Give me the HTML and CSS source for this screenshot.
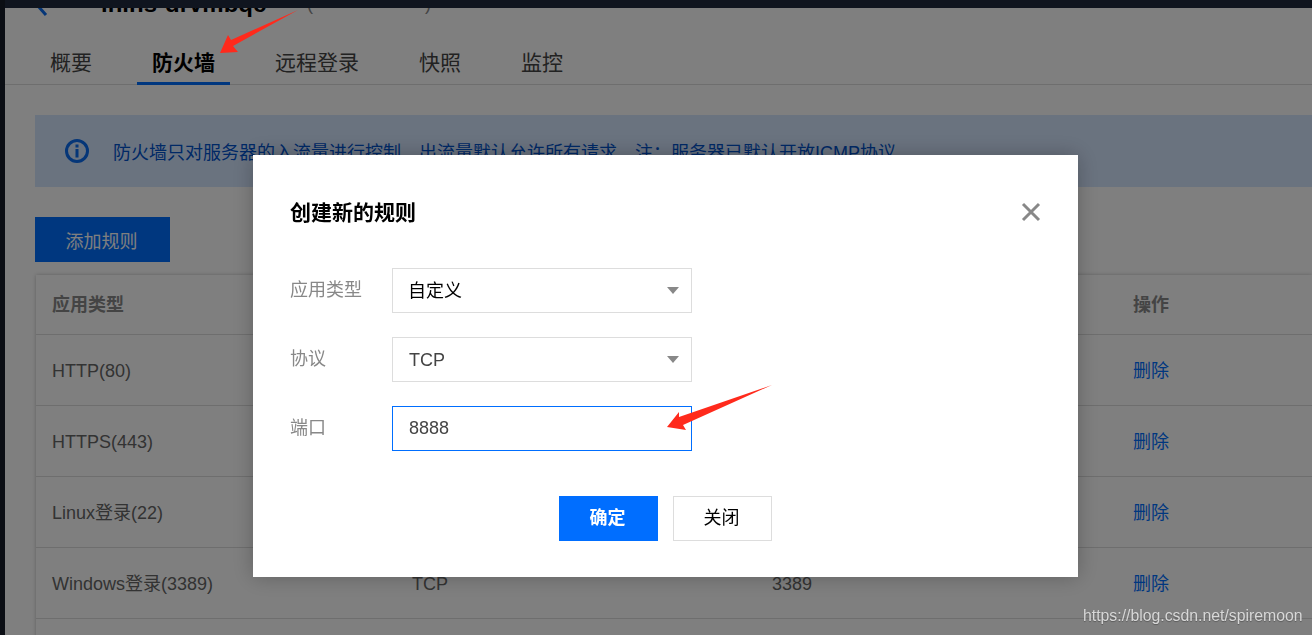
FILE: index.html
```html
<!DOCTYPE html>
<html lang="zh-CN">
<head>
<meta charset="utf-8">
<title>防火墙</title>
<link rel="stylesheet" href="styles.css">
</head>
<body>
<div class="page">
  <aside class="side"></aside>
  <div class="column">
    <div class="topbar"></div>
    <main class="main">
      <div class="head">
        <svg class="back" width="14" height="34" viewBox="0 0 14 34"><path d="M11 10 L3 19 L11 28" fill="none" stroke="#0a6cf0" stroke-width="3"/></svg>
        <h1 class="name">lhins-drvmbqc</h1>
        <span class="paren">(</span>
        <span class="paren">)</span>
      </div>
      <nav class="tabs">
        <a class="tab">概要</a>
        <a class="tab tab-on">防火墙</a>
        <a class="tab">远程登录</a>
        <a class="tab">快照</a>
        <a class="tab">监控</a>
      </nav>
      <div class="notice">
        <svg class="info" width="24" height="24" viewBox="0 0 24 24"><circle cx="12" cy="12" r="10.5" fill="none" stroke="#0a6cf0" stroke-width="3"/><rect x="10.5" y="5.5" width="3" height="3" fill="#0a6cf0"/><rect x="10.5" y="10" width="3" height="8.5" fill="#0a6cf0"/></svg>
        <span>防火墙只对服务器的入流量进行控制，出流量默认允许所有请求。注：服务器已默认开放ICMP协议</span>
      </div>
      <button class="add">添加规则</button>
      <div class="table">
        <div class="row row-head"><span>应用类型</span><span>协议</span><span>端口</span><span>操作</span></div>
        <div class="row"><span>HTTP(80)</span><span>TCP</span><span>80</span><a class="link">删除</a></div>
        <div class="row"><span>HTTPS(443)</span><span>TCP</span><span>443</span><a class="link">删除</a></div>
        <div class="row"><span>Linux登录(22)</span><span>TCP</span><span>22</span><a class="link">删除</a></div>
        <div class="row"><span>Windows登录(3389)</span><span>TCP</span><span>3389</span><a class="link">删除</a></div>
        <div class="row"></div>
      </div>
    </main>
  </div>
</div>
<div class="overlay">
  <section class="modal">
    <div class="modal-head">
      <h2 class="modal-title">创建新的规则</h2>
      <svg class="close" width="20" height="20" viewBox="0 0 20 20"><path d="M2 2 L18 18 M18 2 L2 18" stroke="#888" stroke-width="3" fill="none"/></svg>
    </div>
    <div class="form">
      <div class="field"><label class="label">应用类型</label><div class="control"><span class="value-cn">自定义</span><i class="caret"></i></div></div>
      <div class="field"><label class="label">协议</label><div class="control"><span>TCP</span><i class="caret"></i></div></div>
      <div class="field"><label class="label">端口</label><div class="control control-on"><span class="value-num">8888</span></div></div>
    </div>
    <div class="actions">
      <button class="btn btn-main">确定</button>
      <button class="btn">关闭</button>
    </div>
  </section>
</div>
<svg class="arrow arrow-one" width="82" height="46" viewBox="218 9 82 46"><path d="M220 53 L228 35 L231 40 L298 10 L233 46 L238 52 Z" fill="#ff2a1c"/></svg>
<svg class="arrow arrow-two" width="108" height="48" viewBox="665 384 108 48"><path d="M667 427 L679 412 L679 417 L772 385 L683 425 L686 430 Z" fill="#ff2a1c"/></svg>
<div class="mark">https://blog.csdn.net/spiremoon</div>
</body>
</html>
```

FILE: styles.css
```css
* { box-sizing: border-box; }
html, body { margin: 0; height: 100%; overflow: hidden; }
body { font-family: "Liberation Sans", "Noto Sans CJK SC", sans-serif; color: #000; background: #fff; }
.page { display: flex; height: 635px; overflow: hidden; }
.side { width: 5px; flex: none; background: #161c28; }
.column { flex: 1; min-width: 0; display: flex; flex-direction: column; }
.topbar { height: 8px; flex: none; background: #202a3e; position: relative; z-index: 1; }
.main { flex: 1; min-height: 0; background: #fff; }

.head { display: flex; align-items: center; height: 34px; margin-top: -21px; padding-left: 30px; }
.back { margin-right: 52px; flex: none; }
.name { margin: 0; width: 206px; font-size: 24px; line-height: 34px; font-weight: 700; color: #000; }
.paren { font-size: 18px; color: #888; }
.paren + .paren { margin-left: 112px; }

.tabs { display: flex; gap: 30px; height: 37px; margin-top: 27px; padding-left: 30px; border-bottom: 1px solid #ddd; }
.tab { height: 37px; padding: 0 15px; font-size: 21px; line-height: 29px; color: #444; }
.tab-on { font-weight: 700; color: #000; border-bottom: 3px solid #006eff; }

.notice { display: flex; align-items: center; gap: 24px; height: 72px; margin: 30px 0 0 30px; padding-left: 30px; background: #d5e6ff; color: #0052cc; font-size: 18px; }
.info { flex: none; }

.add { display: block; width: 135px; height: 45px; margin: 30px 0 0 30px; padding: 0 2px 0 0; border: 0; background: #006eff; color: #fff; font: inherit; font-size: 18px; }

.table { margin: 13px 0 0 31px; background: #fff; box-shadow: 0 0 4px rgba(0,0,0,.25); }
.row { display: grid; grid-template-columns: 360px 360px 361px 1fr; align-items: center; height: 71px; padding: 2px 0 0 16px; border-bottom: 1px solid #ddd; font-size: 18px; line-height: 24px; color: #666; }
.row-head { height: 60px; padding-top: 1px; font-weight: 700; color: #888; }
.link { color: #006eff; }

.overlay { position: fixed; inset: 0; z-index: 2; padding: 155px 0 0 253px; background: rgba(0,0,0,.5); }
.modal { width: 825px; padding: 44px 37px 36px; background: #fff; box-shadow: 0 0 20px rgba(0,0,0,.25); }
.modal-head { display: flex; align-items: center; justify-content: space-between; height: 28px; }
.modal-title { margin: 0; font-size: 21px; line-height: 28px; font-weight: 700; color: #000; }
.close { flex: none; margin-right: 0; margin-top: -3px; }
.form { display: flex; flex-direction: column; gap: 24px; margin-top: 41px; }
.field { display: flex; align-items: center; }
.label { width: 102px; padding-bottom: 2px; font-size: 18px; line-height: 24px; color: #888; }
.control { display: flex; align-items: center; justify-content: space-between; width: 300px; height: 45px; padding: 0 12px 0 16px; border: 1px solid #ddd; font-size: 18px; line-height: 24px; color: #444; }
.control-on { border-color: #006eff; }
.value-cn { margin: 1px 0 0 -1px; color: #000; }
.value-num { margin-top: -1px; }
.caret { width: 0; height: 0; border-left: 6.5px solid transparent; border-right: 6.5px solid transparent; border-top: 7px solid #888; }
.actions { display: flex; justify-content: center; gap: 15px; margin-top: 45px; }
.btn { width: 99px; height: 45px; padding: 0 2px 1px 0; border: 1px solid #ddd; background: #fff; color: #000; font: inherit; font-size: 18px; line-height: 24px; }
.btn-main { border-color: #006eff; background: #006eff; color: #fff; font-weight: 700; }

.arrow { position: fixed; z-index: 3; }
.arrow-one { left: 218px; top: 9px; }
.arrow-two { left: 665px; top: 384px; }
.mark { position: fixed; z-index: 3; left: 1083px; top: 607px; font-size: 15.8px; line-height: 18px; color: #d8d8d8; text-shadow: 0 1px 1px rgba(0,0,0,.3); white-space: nowrap; }
```
